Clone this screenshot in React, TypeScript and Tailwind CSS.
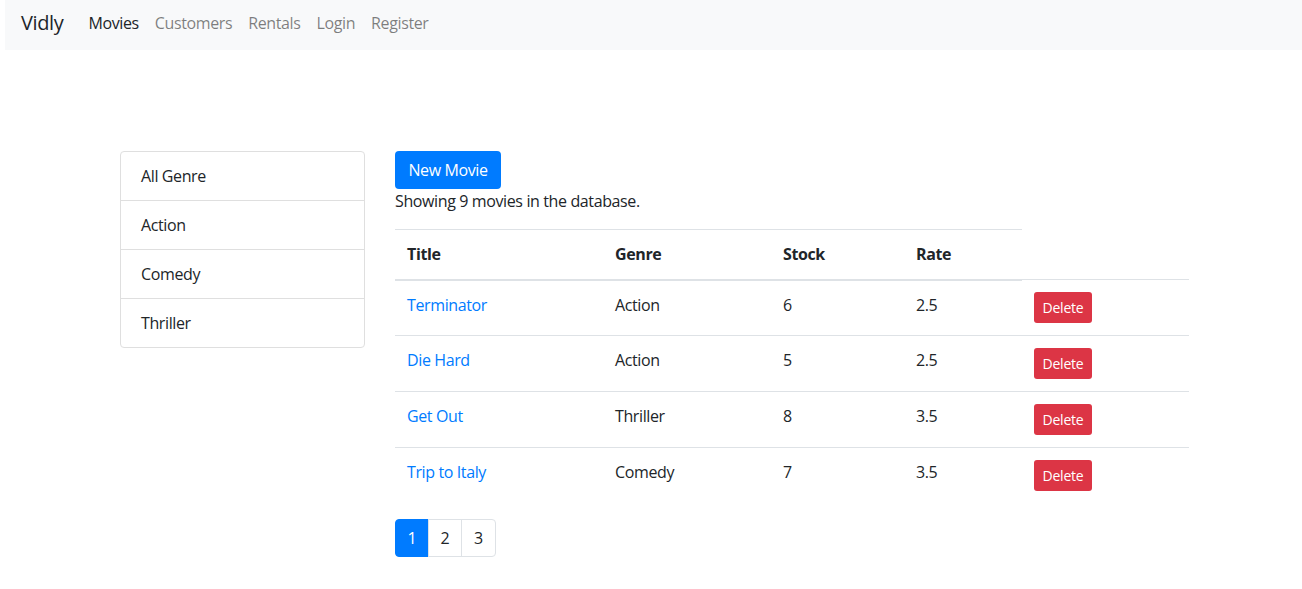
const genres = ['All Genre', 'Action', 'Comedy', 'Thriller'];

const movies = [
    { title: 'Terminator', genre: 'Action', stock: 6, rate: 2.5 },
    { title: 'Die Hard', genre: 'Action', stock: 5, rate: 2.5 },
    { title: 'Get Out', genre: 'Thriller', stock: 8, rate: 3.5 },
    { title: 'Trip to Italy', genre: 'Comedy', stock: 7, rate: 3.5 },
];

const navLinks = ['Customers', 'Rentals', 'Login', 'Register'];

function NavBar() {
    return (
        <nav className="ml-[5px] h-[50px] bg-[#f8f9fa] flex items-center pl-4 pb-[4px]">
            <span className="text-[20px] text-[#212529] mr-[17px] leading-[30px]">Vidly</span>
            <span className="px-2 text-[#212529]">Movies</span>
            {navLinks.map((l) => (
                <span key={l} className="px-2 text-black/50">
                    {l}
                </span>
            ))}
        </nav>
    );
}

function GenreList() {
    return (
        <ul className="w-[245px] shrink-0 self-start border border-[#dfdfdf] rounded-[4px]">
            {genres.map((g, i) => (
                <li
                    key={g}
                    className={`flex items-center px-5 ${i > 0 ? 'h-[49px] border-t border-[#dfdfdf]' : 'h-[48px]'}`}
                >
                    {g}
                </li>
            ))}
        </ul>
    );
}

function MoviesTable() {
    const th = 'px-3 border-t border-b-2 border-[#dee2e6] font-bold';
    const td = 'px-3 pt-3 align-top border-t border-[#dee2e6]';
    return (
        <table className="border-collapse w-[794px] text-left">
            <thead>
                <tr className="h-[50px]">
                    <th className={`w-[208px] ${th}`}>Title</th>
                    <th className={`w-[168px] ${th}`}>Genre</th>
                    <th className={`w-[133px] ${th}`}>Stock</th>
                    <th className={`w-[118px] ${th}`}>Rate</th>
                </tr>
            </thead>
            <tbody>
                {movies.map((m) => (
                    <tr key={m.title} className="h-[56px]">
                        <td className={`${td} text-[#007bff]`}>{m.title}</td>
                        <td className={td}>{m.genre}</td>
                        <td className={td}>{m.stock}</td>
                        <td className={td}>{m.rate}</td>
                        <td className={td}>
                            <button className="bg-[#dc3545] text-white text-[14px] tracking-[-0.2px] w-[58px] h-[31px] rounded-[3px]">
                                Delete
                            </button>
                        </td>
                    </tr>
                ))}
            </tbody>
        </table>
    );
}

function Pagination() {
    return (
        <div className="flex mt-[15px]">
            {[1, 2, 3].map((n) => (
                <span
                    key={n}
                    className={`w-[34px] h-[38px] flex items-center justify-center border ${
                        n === 1
                            ? 'bg-[#007bff] border-[#007bff] text-white rounded-l-[4px]'
                            : 'border-[#dee2e6] text-[#212529] -ml-px'
                    } ${n === 3 ? 'rounded-r-[4px] w-[35px]' : ''}`}
                >
                    {n}
                </span>
            ))}
        </div>
    );
}

export default function App() {
    return (
        <div className="min-h-[589px] bg-white text-[#212529] text-[16px] leading-6 tracking-[-0.38px] font-['Open_Sans',sans-serif]">
            <NavBar />
            <main className="flex gap-[30px] pl-[120px] pt-[101px]">
                <GenreList />
                <div>
                    <button className="bg-[#007bff] text-white h-[38px] w-[106px] rounded-[4px]">New Movie</button>
                    <p className="mb-4">Showing 9 movies in the database.</p>
                    <MoviesTable />
                    <Pagination />
                </div>
            </main>
        </div>
    );
}
